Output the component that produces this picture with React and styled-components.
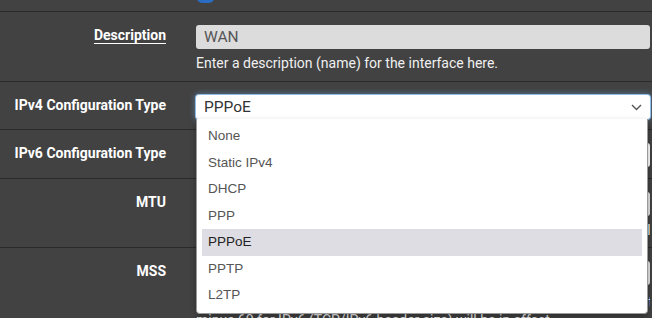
import React from "react";
import styled, { createGlobalStyle, css } from "styled-components";

const Global = createGlobalStyle`
  html, body { margin: 0; padding: 0; }
  body {
    background: #424242;
    font-family: Roboto, "Liberation Sans", Arial, sans-serif;
    overflow: hidden;
  }
  * { box-sizing: border-box; }
`;

const Page = styled.div`
  width: 652px;
  height: 318px;
  overflow: hidden;
  background: #424242;
`;

const Row = styled.div`
  display: grid;
  grid-template-columns: 166px 1fr;
  column-gap: 30px;
  padding: 13px 2px ${(p) => p.$pb || 10}px 0;
  border-bottom: 1px solid #2a2a2a;
  ${(p) =>
    p.$top &&
    css`
      height: 12px;
      padding: 0 2px 0 0;
      overflow: hidden;
    `}
`;

const Label = styled.div`
  color: #ffffff;
  font-weight: 700;
  font-size: 14px;
  line-height: 20px;
  text-align: right;
  white-space: nowrap;
  ${(p) =>
    p.$underline &&
    css`
      text-decoration: underline;
      text-underline-offset: 3px;
    `}
`;

const Content = styled.div`
  min-width: 0;
  position: relative;
`;

const Check = styled.div`
  width: 17px;
  height: 17px;
  margin-top: -14px;
  margin-left: 1px;
  border-radius: 5px;
  background: #2a6cc4;
`;

const TextInput = styled.div`
  height: 24px;
  border-radius: 3px;
  background: ${(p) => (p.$disabled ? "#dcdcdc" : "#e4e4e4")};
  color: #555;
  font-size: 15.5px;
  line-height: 24px;
  padding: 0 8px;
`;

const Help = styled.div`
  margin-top: ${(p) => p.$gap || 5}px;
  color: #f0f0f0;
  font-size: 14px;
  line-height: 18px;
  white-space: nowrap;
  overflow: hidden;
`;

const SelectBox = styled.div`
  height: 24px;
  border-radius: 3px;
  background: #ffffff;
  color: #333;
  font-size: 15.5px;
  line-height: 24px;
  padding: 0 8px;
  display: flex;
  align-items: center;
  justify-content: space-between;
  ${(p) =>
    p.$focus &&
    css`
      box-shadow: 0 0 0 1px #8fbbe6, 0 0 6px 1px rgba(110, 170, 230, 0.55);
    `}
`;

const Chevron = () => (
  <svg width="11" height="7" viewBox="0 0 11 7">
    <polyline
      points="1,1 5.5,5.5 10,1"
      fill="none"
      stroke="#555"
      strokeWidth="1.4"
    />
  </svg>
);

const Menu = styled.ul`
  position: absolute;
  top: 24px;
  left: 0;
  right: 2px;
  margin: 0;
  padding: 4px 5px;
  list-style: none;
  background: #ffffff;
  border: 1px solid #9a9a9a;
  border-top: none;
  border-radius: 0 0 4px 4px;
  box-shadow: 0 3px 6px rgba(0, 0, 0, 0.3);
  z-index: 10;
`;

const Option = styled.li`
  height: 26.5px;
  line-height: 26.5px;
  padding-left: 6px;
  font-family: "Liberation Sans", Arial, sans-serif;
  font-size: 13.5px;
  color: ${(p) => (p.$active ? "#222" : "#555")};
  background: ${(p) => (p.$active ? "#dddde3" : "transparent")};
`;

const options = ["None", "Static IPv4", "DHCP", "PPP", "PPPoE", "PPTP", "L2TP"];

export default function App() {
  return (
    <Page>
      <Global />
      <Row $top>
        <div />
        <Content>
          <Check />
        </Content>
      </Row>
      <Row $pb={9}>
        <Label $underline>Description</Label>
        <Content>
          <TextInput $disabled>WAN</TextInput>
          <Help>Enter a description (name) for the interface here.</Help>
        </Content>
      </Row>
      <Row>
        <Label>IPv4 Configuration Type</Label>
        <Content>
          <SelectBox $focus>
            <span>PPPoE</span>
            <Chevron />
          </SelectBox>
          <Menu>
            {options.map((o) => (
              <Option key={o} $active={o === "PPPoE"}>
                {o}
              </Option>
            ))}
          </Menu>
        </Content>
      </Row>
      <Row $pb={11}>
        <Label>IPv6 Configuration Type</Label>
        <Content>
          <SelectBox>
            <span>None</span>
            <Chevron />
          </SelectBox>
        </Content>
      </Row>
      <Row $pb={8}>
        <Label>MTU</Label>
        <Content>
          <TextInput />
          <Help>
            If this field is blank, the adapter's default MTU will be used. This is typically
          </Help>
        </Content>
      </Row>
      <Row>
        <Label>MSS</Label>
        <Content>
          <TextInput />
          <Help $gap={8}>
            If a value is entered in this field, then MSS clamping for TCP connections to the value entered above minus 40 for IPv4 (TCP/IPv4 header size) and except
            <br />
            minus 60 for IPv6 (TCP/IPv6 header size) will be in effect.
          </Help>
        </Content>
      </Row>
    </Page>
  );
}
